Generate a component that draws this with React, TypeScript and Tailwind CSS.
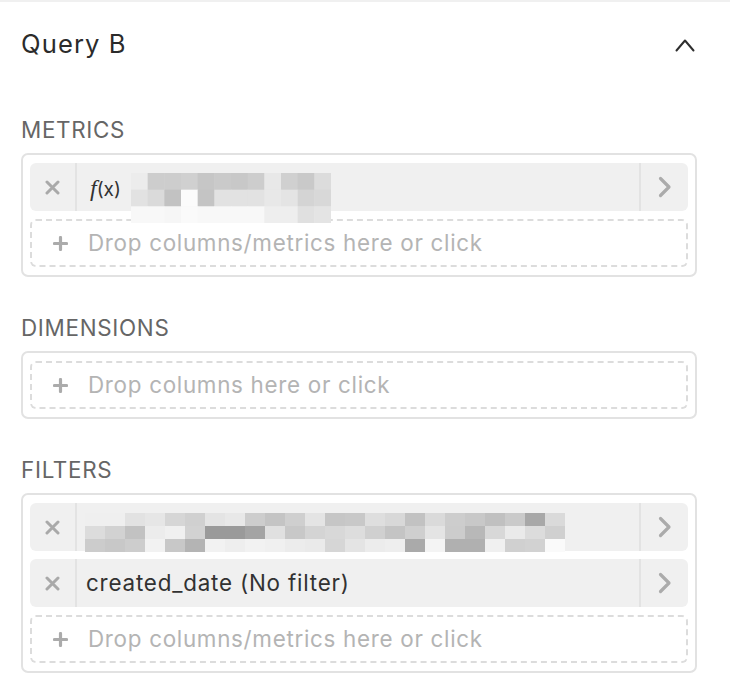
import type { ReactNode } from "react";

const metricsCells = [
  ["#ececec", "#cdcdcd", "#cdcdcd", "#d0d0d0", "#c6c6c6", "#cacaca", "#c8c8c8", "#cdcdcd", "#e8e8e8", "#d0d0d0", "#c9c9c9", "#dcdcdc"],
  ["#e2e2e2", "#dadada", "#c2c2c2", "#fbfbfb", "#c4c4c4", "#e2e2e2", "#e2e2e2", "#e2e2e2", "#e8e8e8", "#e4e4e4", "#d4d4d4", "#d8d8d8"],
  ["#f8f8f8", "#f8f8f8", "#f6f6f6", "#fafafa", "#f8f8f8", "#f8f8f8", "#f8f8f8", "#f8f8f8", "#eeeeee", "#eeeeee", "#e0e0e0", "#e4e4e4"],
];

const filterCells = [
  ["#efefef", "#efefef", "#e2e2e2", "#e6e6e6", "#d6d6d6", "#d0d0d0", "#e4e4e4", "#e8e8e8", "#cdcdcd", "#c4c4c4", "#cfcfcf", "#e4e4e4", "#c6c6c6", "#c8c8c8", "#dedede", "#d8d8d8", "#c2c2c2", "#dadada", "#cdcdcd", "#c8c8c8", "#c0c0c0", "#cacaca", "#a8a8a8", "#dadada"],
  ["#dcdcdc", "#d2d2d2", "#c2c2c2", "#ececec", "#f0f0f0", "#d2d2d2", "#9a9a9a", "#9a9a9a", "#a4a4a4", "#e0e0e0", "#c8c8c8", "#d4d4d4", "#d8d8d8", "#dddddd", "#d0d0d0", "#c4c4c4", "#cfcfcf", "#e4e4e4", "#cccccc", "#b8b8b8", "#d8d8d8", "#eaeaea", "#dcdcdc", "#d0d0d0"],
  ["#cccccc", "#c8c8c8", "#cdcdcd", "#f2f2f2", "#c8c8c8", "#b4b4b4", "#f2f2f2", "#eeeeee", "#f2f2f2", "#f0f0f0", "#ececec", "#eaeaea", "#d6d6d6", "#e4e4e4", "#ececec", "#eeeeee", "#aaaaaa", "#f4f4f4", "#b0b0b0", "#b0b0b0", "#f0f0f0", "#d0d0d0", "#d2d2d2", "#fafafa"],
];

const Mosaic = ({ cells, width, height, className }: { cells: string[][]; width: number; height: number; className: string }) => {
  const cw = width / cells[0].length;
  const ch = height / cells.length;
  return (
    <svg width={width} height={height} className={className}>
      {cells.map((row, r) =>
        row.map((c, i) => <rect key={`${r}-${i}`} x={i * cw} y={r * ch} width={cw + 0.5} height={ch + 0.5} fill={c} />)
      )}
    </svg>
  );
};

const XIcon = () => (
  <svg width="15" height="15" viewBox="0 0 15 15">
    <path d="M2 2 13 13M13 2 2 13" stroke="#a9a9a9" strokeWidth="3" strokeLinecap="round" />
  </svg>
);

const PlusIcon = () => (
  <svg width="15" height="15" viewBox="0 0 15 15">
    <path d="M7.5 1.5v12M1.5 7.5h12" stroke="#ababab" strokeWidth="3.2" strokeLinecap="round" />
  </svg>
);

const ChevronRight = () => (
  <svg width="14" height="22" viewBox="0 0 14 22">
    <polyline points="2.5,2.5 11,11 2.5,19.5" fill="none" stroke="#ababab" strokeWidth="3.2" strokeLinecap="round" strokeLinejoin="round" />
  </svg>
);

const Pill = ({ children, overlay }: { children?: ReactNode; overlay?: ReactNode }) => (
  <div className="relative flex h-[48px] items-stretch rounded-[6px] bg-[#f0f0f0]">
    <div className="flex w-[47px] items-center justify-center border-r-[2px] border-[#e3e3e3]">
      <XIcon />
    </div>
    <div className="flex flex-1 items-center pl-[9px] text-[22.4px] tracking-[0.8px] text-[#323232]">{children}</div>
    <div className="flex w-[49px] items-center justify-center border-l-[2px] border-[#e3e3e3]">
      <ChevronRight />
    </div>
    {overlay}
  </div>
);

const DropZone = ({ label }: { label: string }) => (
  <div className="flex h-[48px] items-center rounded-[6px] border-2 border-dashed border-[#dcdcdc] pl-[21px]">
    <PlusIcon />
    <span className="ml-[20px] text-[22.4px] tracking-[0.7px] text-[#b4b4b4]">{label}</span>
  </div>
);

const Section = ({ title, children }: { title: string; children: ReactNode }) => (
  <section className="mr-[33px] ml-[21px]">
    <h3 className="h-[31px] text-[22.4px] leading-[31px] tracking-[0.7px] text-[#666666]">{title}</h3>
    <div className="mt-[8px] flex flex-col gap-[8px] rounded-[7px] border-2 border-[#e2e2e2] px-[7px] py-[8px]">{children}</div>
  </section>
);

const App = () => {
  return (
    <div className="h-[684px] w-[730px] overflow-hidden border-t-2 border-[#f0f0f0] bg-white font-['Inter','Liberation_Sans',sans-serif]">
      <header className="mt-[24px] mr-[35px] ml-[21px] flex h-[36px] items-center justify-between">
        <h2 className="text-[25.6px] tracking-[1.1px] text-[#2b2b2b]">Query B</h2>
        <svg width="20" height="14" viewBox="0 0 20 14" className="mt-[2px]">
          <polyline points="1.5,12.5 10,2.5 18.5,12.5" fill="none" stroke="#2e2e2e" strokeWidth="2" strokeLinecap="round" strokeLinejoin="round" />
        </svg>
      </header>

      <div className="mt-[52px] flex flex-col gap-[35px]">
        <Section title="METRICS">
          <Pill overlay={<Mosaic cells={metricsCells} width={200} height={50} className="absolute top-[10px] left-[101px] z-10" />}>
            <span className="ml-[4px] mt-[2px] tracking-normal">
              <span className="font-['Liberation_Serif',serif] text-[24px] italic">f</span>
              <span className="text-[19px]">(x)</span>
            </span>
          </Pill>
          <DropZone label="Drop columns/metrics here or click" />
        </Section>

        <Section title="DIMENSIONS">
          <DropZone label="Drop columns here or click" />
        </Section>

        <Section title="FILTERS">
          <Pill overlay={<Mosaic cells={filterCells} width={480} height={39} className="absolute top-[10px] left-[55px] z-10" />} />
          <Pill>created_date (No filter)</Pill>
          <DropZone label="Drop columns/metrics here or click" />
        </Section>
      </div>
    </div>
  );
};

export default App;
